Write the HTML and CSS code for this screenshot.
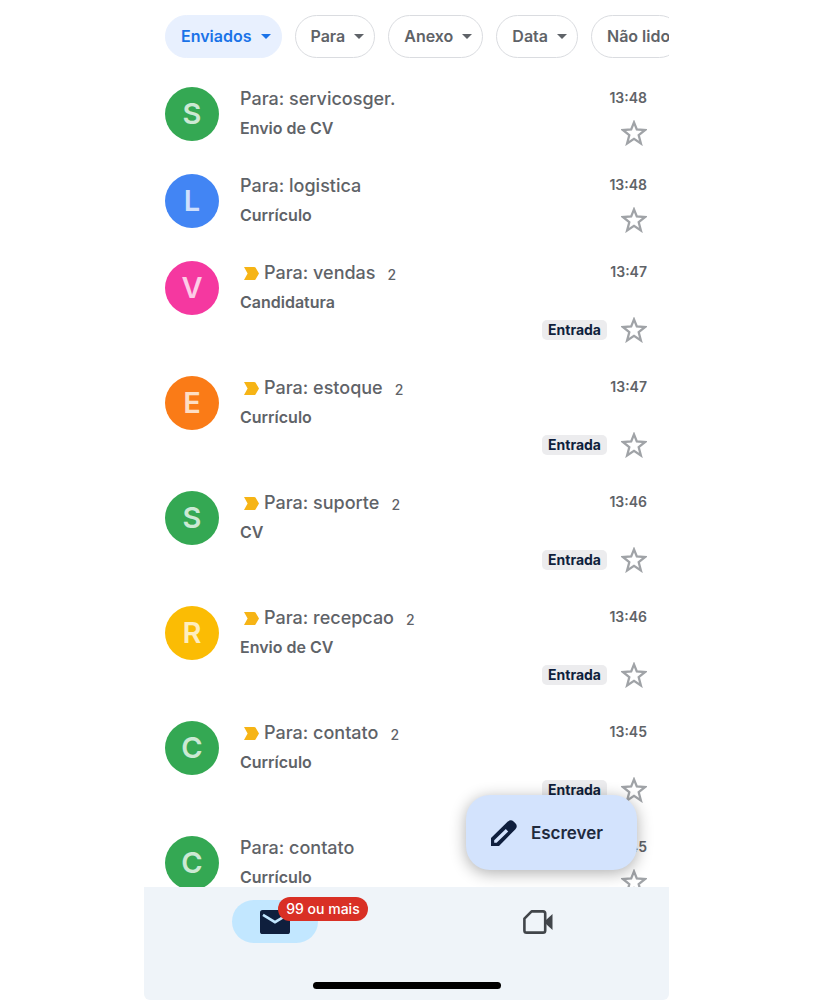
FILE: index.html
```
<!DOCTYPE html>
<html lang="pt-BR">
<head>
    <meta charset="UTF-8">
    <meta name="viewport" content="width=device-width, initial-scale=1.0">
    <title>Enviados</title>
    <link rel="stylesheet" href="styles.css">
</head>
<body>
    <!-- Shared icons -->
    <svg class="sprite" aria-hidden="true">
        <symbol id="star" viewBox="0 0 26 26">
            <path d="M13 2.4l2.8 7 8.3.6-6.4 5.2 2.2 8.3-6.9-4.6-6.9 4.6 2.2-8.3-6.4-5.2 8.3-.6z" fill="none" stroke="#a0a3a7" stroke-width="2.3"/>
        </symbol>
        <symbol id="important" viewBox="0 0 15 13">
            <path d="M0 0h10.2q.8 0 1.3.6L15 6.5l-3.5 5.9q-.5.6-1.3.6H0l3.6-6.5z" fill="#f6b415"/>
        </symbol>
        <symbol id="arrow" viewBox="0 0 10 5">
            <path d="M0 0h10L5 5z" fill="currentColor"/>
        </symbol>
    </svg>

    <div class="app">
        <div class="filters">
            <button class="chip active" type="button">Enviados <svg class="arrow"><use href="#arrow"/></svg></button>
            <button class="chip" type="button">Para <svg class="arrow"><use href="#arrow"/></svg></button>
            <button class="chip" type="button">Anexo <svg class="arrow"><use href="#arrow"/></svg></button>
            <button class="chip" type="button">Data <svg class="arrow"><use href="#arrow"/></svg></button>
            <button class="chip" type="button">Não lido</button>
        </div>

        <!-- Messages -->
        <main class="list">
            <article class="mail">
                <div class="avatar green">S</div>
                <div class="text">
                    <div class="recipient">Para: servicosger.</div>
                    <div class="subject">Envio de CV</div>
                </div>
                <div class="meta">
                    <time>13:48</time>
                    <div class="actions"><button class="star" type="button" aria-label="Estrela"><svg><use href="#star"/></svg></button></div>
                </div>
            </article>
            <article class="mail">
                <div class="avatar blue">L</div>
                <div class="text">
                    <div class="recipient">Para: logistica</div>
                    <div class="subject">Currículo</div>
                </div>
                <div class="meta">
                    <time>13:48</time>
                    <div class="actions"><button class="star" type="button" aria-label="Estrela"><svg><use href="#star"/></svg></button></div>
                </div>
            </article>
            <article class="mail tagged">
                <div class="avatar pink">V</div>
                <div class="text">
                    <div class="recipient"><svg class="important"><use href="#important"/></svg>Para: vendas <span class="count">2</span></div>
                    <div class="subject">Candidatura</div>
                </div>
                <div class="meta">
                    <time>13:47</time>
                    <div class="actions"><span class="tag">Entrada</span><button class="star" type="button" aria-label="Estrela"><svg><use href="#star"/></svg></button></div>
                </div>
            </article>
            <article class="mail tagged">
                <div class="avatar orange">E</div>
                <div class="text">
                    <div class="recipient"><svg class="important"><use href="#important"/></svg>Para: estoque <span class="count">2</span></div>
                    <div class="subject">Currículo</div>
                </div>
                <div class="meta">
                    <time>13:47</time>
                    <div class="actions"><span class="tag">Entrada</span><button class="star" type="button" aria-label="Estrela"><svg><use href="#star"/></svg></button></div>
                </div>
            </article>
            <article class="mail tagged">
                <div class="avatar green">S</div>
                <div class="text">
                    <div class="recipient"><svg class="important"><use href="#important"/></svg>Para: suporte <span class="count">2</span></div>
                    <div class="subject">CV</div>
                </div>
                <div class="meta">
                    <time>13:46</time>
                    <div class="actions"><span class="tag">Entrada</span><button class="star" type="button" aria-label="Estrela"><svg><use href="#star"/></svg></button></div>
                </div>
            </article>
            <article class="mail tagged">
                <div class="avatar yellow">R</div>
                <div class="text">
                    <div class="recipient"><svg class="important"><use href="#important"/></svg>Para: recepcao <span class="count">2</span></div>
                    <div class="subject">Envio de CV</div>
                </div>
                <div class="meta">
                    <time>13:46</time>
                    <div class="actions"><span class="tag">Entrada</span><button class="star" type="button" aria-label="Estrela"><svg><use href="#star"/></svg></button></div>
                </div>
            </article>
            <article class="mail tagged">
                <div class="avatar green">C</div>
                <div class="text">
                    <div class="recipient"><svg class="important"><use href="#important"/></svg>Para: contato <span class="count">2</span></div>
                    <div class="subject">Currículo</div>
                </div>
                <div class="meta">
                    <time>13:45</time>
                    <div class="actions"><span class="tag">Entrada</span><button class="star" type="button" aria-label="Estrela"><svg><use href="#star"/></svg></button></div>
                </div>
            </article>
            <article class="mail">
                <div class="avatar green">C</div>
                <div class="text">
                    <div class="recipient">Para: contato</div>
                    <div class="subject">Currículo</div>
                </div>
                <div class="meta">
                    <time>13:45</time>
                    <div class="actions"><button class="star" type="button" aria-label="Estrela"><svg><use href="#star"/></svg></button></div>
                </div>
            </article>
        </main>

        <footer class="bottom">
            <button class="compose" type="button">
                <svg width="26" height="26" viewBox="0 0 26 26">
                    <path fill="#0f1f3d" fill-rule="evenodd" d="M0 26v-8L16.8 1.6q3-2.6 5.8 0l2 2q2.4 2.8-.2 5.6L8 26zM3.2 22.8h2.4L17.2 11.4 14.8 9 3.2 20.2z"/>
                </svg>
                Escrever
            </button>
            <nav class="tabs">
                <button class="tab" type="button" aria-label="E-mail">
                    <span class="pill">
                        <svg width="30" height="24" viewBox="0 0 30 24">
                            <rect width="30" height="24" rx="2.6" fill="#0f1f3d"/>
                            <path d="M3 4.8l12 7.4 12-7.4" fill="none" stroke="#c2e7ff" stroke-width="2.6"/>
                        </svg>
                        <span class="badge">99 ou mais</span>
                    </span>
                </button>
                <button class="tab" type="button" aria-label="Meet">
                    <svg width="30" height="24" viewBox="0 0 30 24">
                        <path d="M8.6 1.4H20q2.2 0 2.2 2.2v16.8q0 2.2-2.2 2.2H3.6q-2.2 0-2.2-2.2V8.6z" fill="none" stroke="#41454a" stroke-width="2.6" stroke-linejoin="round"/>
                        <path d="M22.5 10.6L29.5 4v16l-7-6.6z" fill="#41454a"/>
                    </svg>
                </button>
            </nav>
            <div class="home-bar"></div>
        </footer>
    </div>
</body>
</html>
```
FILE: styles.css
```
* {
    box-sizing: border-box;
}
body {
    margin: 0;
    background-color: #fff;
    color: #5f6368;
    font-family: Inter, "Liberation Sans", sans-serif;
}
button {
    border: none;
    padding: 0;
    background: none;
    font-family: inherit;
    color: inherit;
    cursor: pointer;
}
svg {
    display: block;
    flex-shrink: 0;
}
.sprite {
    position: absolute;
    width: 0;
    height: 0;
}
.app {
    display: flex;
    flex-direction: column;
    max-width: 525px;
    height: 100vh;
    margin: 0 auto;
    overflow: hidden;
}

/* Filter chips */
.filters {
    display: flex;
    flex-shrink: 0;
    gap: 13px;
    padding: 15px 0 29px 21px;
    overflow: hidden;
}
.chip {
    display: flex;
    flex-shrink: 0;
    align-items: center;
    gap: 9px;
    height: 43px;
    padding: 0 10px 1px 15px;
    border: 1px solid #dadce0;
    border-radius: 22px;
    font-size: 16px;
    font-weight: 600;
}
.chip.active {
    background-color: #e8f0fe;
    border-color: #e8f0fe;
    color: #1a73e8;
}
.arrow {
    width: 10px;
    height: 5px;
}

/* Message list */
.list {
    flex: 1;
    min-height: 0;
    padding: 0 22px 0 21px;
    overflow: hidden;
}
.mail {
    display: flex;
    gap: 21px;
    margin-bottom: 28px;
}
.mail.tagged {
    margin-bottom: 33px;
}
.avatar {
    width: 54px;
    height: 54px;
    flex-shrink: 0;
    border-radius: 50%;
    color: rgba(255, 255, 255, 0.75);
    font-size: 29px;
    font-weight: 600;
    line-height: 54px;
    text-align: center;
}
.green {
    background-color: #34a853;
}
.blue {
    background-color: #4285f4;
}
.pink {
    background-color: #f538a0;
}
.orange {
    background-color: #fa7b17;
}
.yellow {
    background-color: #fbbc04;
}
.text {
    flex: 1;
    min-width: 0;
}
.recipient {
    display: flex;
    align-items: center;
    margin-bottom: 7px;
    font-size: 18px;
    font-weight: 500;
    line-height: 24px;
    white-space: nowrap;
}
.important {
    width: 15px;
    height: 13px;
    margin: 0 5px 0 4px;
}
.count {
    margin: 3px 0 0 12px;
    font-size: 14px;
    line-height: 20px;
}
.subject {
    font-size: 16px;
    font-weight: 600;
    line-height: 20px;
}
.meta {
    display: flex;
    flex-direction: column;
    align-items: flex-end;
    gap: 11px;
}
.tagged .meta {
    gap: 34px;
}
.meta time {
    font-size: 14px;
    font-weight: 600;
    line-height: 22px;
}
.actions {
    display: flex;
    align-items: center;
    gap: 14px;
}
.tag {
    padding: 0 6px;
    border-radius: 5px;
    background-color: #ececee;
    color: #0f1f3d;
    font-size: 14px;
    font-weight: 700;
    line-height: 20px;
}
.star svg {
    width: 26px;
    height: 26px;
}

/* Bottom bar */
.bottom {
    position: relative;
    display: flex;
    flex-direction: column;
    flex-shrink: 0;
    align-items: center;
    justify-content: space-between;
    height: 113px;
    padding: 13px 0 11px;
    border-radius: 0 0 6px 6px;
    background-color: #eff4f9;
}
.compose {
    position: absolute;
    right: 32px;
    bottom: calc(100% + 17px);
    display: flex;
    align-items: center;
    gap: 14px;
    height: 75px;
    padding: 0 34px 0 25px;
    border-radius: 24px;
    background-color: #d3e3fd;
    box-shadow: 0 3px 16px rgba(0, 0, 0, 0.32);
    color: #1f2a3d;
    font-size: 17px;
    font-weight: 600;
    clip-path: inset(-30px -30px -17px -30px);
}
.tabs {
    display: flex;
    width: 100%;
}
.tab {
    display: flex;
    flex: 1;
    align-items: center;
    justify-content: center;
}
.pill {
    position: relative;
    display: flex;
    align-items: center;
    justify-content: center;
    width: 86px;
    height: 43px;
    border-radius: 22px;
    background-color: #c2e7ff;
}
.badge {
    position: absolute;
    top: -3px;
    left: 46px;
    padding: 0 8px;
    border-radius: 12px;
    background-color: #d93025;
    color: #fff;
    font-size: 14px;
    font-weight: 500;
    line-height: 24px;
    white-space: nowrap;
}
.home-bar {
    width: 188px;
    height: 7px;
    border-radius: 4px;
    background-color: #000;
}
```
